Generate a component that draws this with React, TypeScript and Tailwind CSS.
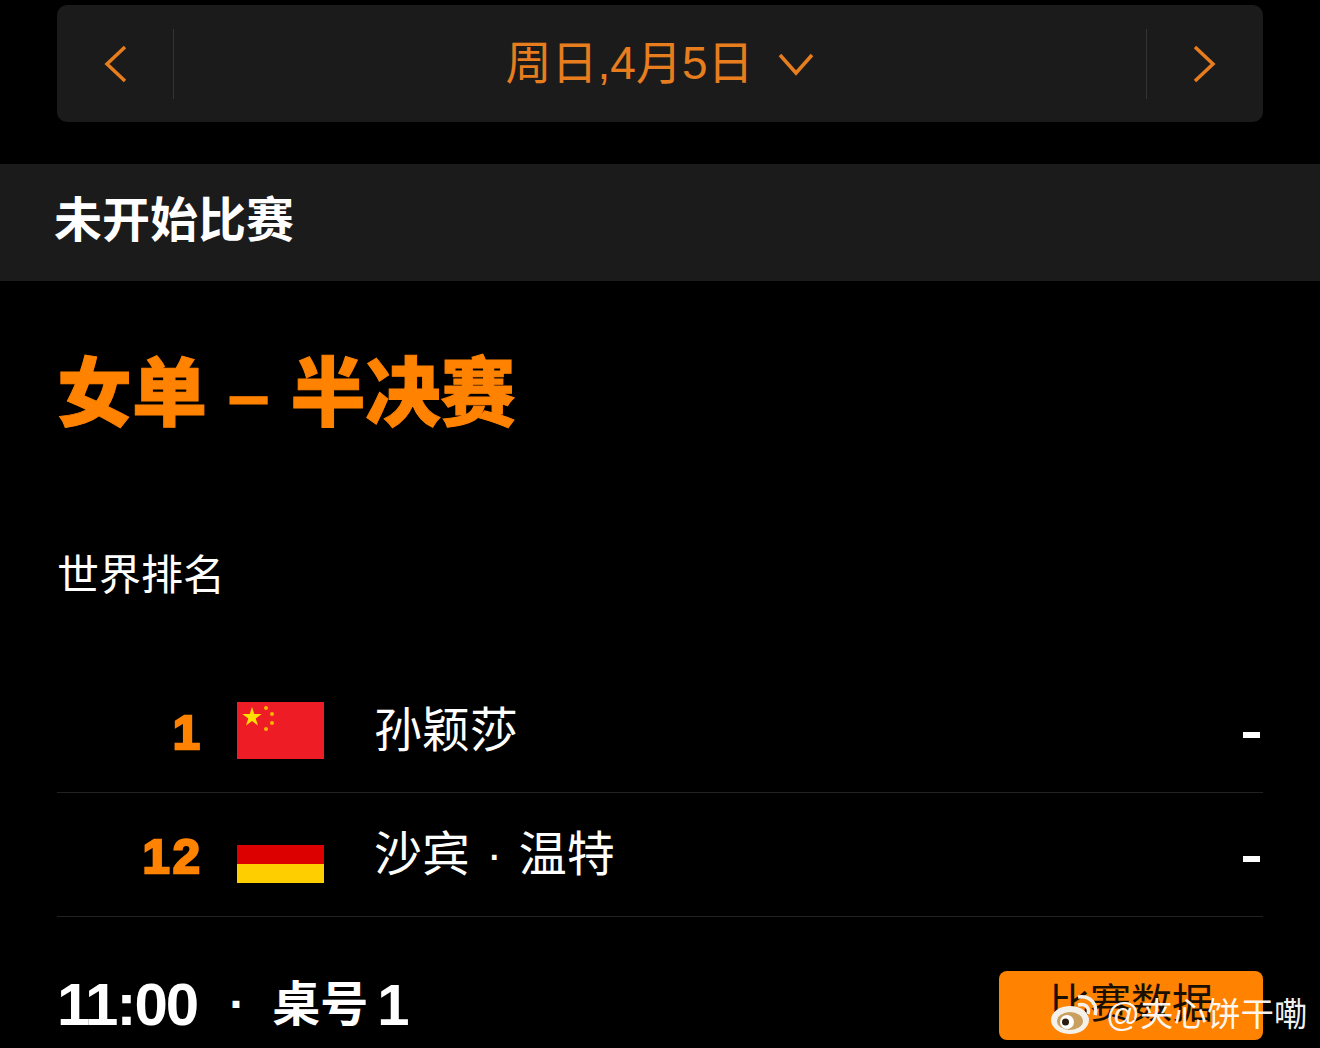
const cjk = "font-['Liberation_Sans','Noto_Sans_CJK_SC',sans-serif]";

function Row({ rank, name, flag, border }: { rank: string; name: string; flag: React.ReactNode; border?: boolean }) {
  return (
    <div className={`h-[124px] flex items-center ${border ? 'border-b border-[#222]' : ''}`}>
      <div className="w-[146px] mt-[4px] text-right text-[49px] leading-none font-black text-[#ff8200] [-webkit-text-stroke:2.5px_#ff8200] tracking-[3px]">{rank}</div>
      <div className="ml-[34px] w-[87px] h-[57px]">{flag}</div>
      <div className="ml-[50px] text-[48px] leading-none text-white font-normal [word-spacing:3px]">{name}</div>
      <div className="ml-auto mr-[3px] mt-[8px] w-[17px] h-[6px] bg-white" />
    </div>
  );
}

const China = (
  <svg width="87" height="57" viewBox="0 0 87 57" className="block">
    <rect width="87" height="57" fill="#ee1c25" />
    <polygon fill="#ffe000" points="15,5 17.3,12 24.7,12 18.7,16.4 21,23.4 15,19.1 9,23.4 11.3,16.4 5.3,12 12.7,12" />
    <circle cx="29" cy="6" r="2" fill="#f7b500" />
    <circle cx="35" cy="12" r="2" fill="#f7b500" />
    <circle cx="35" cy="21" r="2" fill="#f7b500" />
    <circle cx="29" cy="27" r="2" fill="#f7b500" />
  </svg>
);

const Germany = (
  <div className="h-full flex flex-col">
    <div className="h-[19px] bg-black" />
    <div className="h-[19px] bg-[#dd0000]" />
    <div className="h-[19px] bg-[#ffce00]" />
  </div>
);

export default function App() {
  return (
    <div className={`w-[1320px] h-[1048px] overflow-hidden bg-black text-white relative ${cjk}`}>
      <div className="pt-[5px] px-[57px]">
        <div className="h-[117px] rounded-[10px] bg-[#1b1b1b] flex items-center text-[#e87d1e]">
          <div className="w-[117px] h-[70px] border-r border-[#333] flex items-center justify-center">
            <svg width="26" height="38" viewBox="0 0 26 38" fill="none" stroke="#e87d1e" strokeWidth="3.5"><path d="M23 2 L5 19 L23 36" /></svg>
          </div>
          <div className="flex-1 flex items-center justify-center gap-[25px]">
            <span className="text-[46px] leading-none font-normal -mt-[2px]">周日,4月5日</span>
            <svg width="36" height="24" viewBox="0 0 36 24" fill="none" stroke="#e87d1e" strokeWidth="3.5"><path d="M2 3 L18 21 L34 3" /></svg>
          </div>
          <div className="w-[117px] h-[70px] border-l border-[#333] flex items-center justify-center">
            <svg width="26" height="38" viewBox="0 0 26 38" fill="none" stroke="#e87d1e" strokeWidth="3.5"><path d="M3 2 L21 19 L3 36" /></svg>
          </div>
        </div>
      </div>

      <div className="mt-[42px] h-[117px] bg-[#1b1b1b] flex items-center pl-[54px]">
        <span className="text-[48px] leading-none font-bold -mt-[3px]">未开始比赛</span>
      </div>

      <div className="px-[57px]">
        <div className="mt-[76px] text-[75px] leading-none font-black text-[#ff8200] [-webkit-text-stroke:1px_#ff8200]">女单 – 半决赛</div>
        <div className="mt-[123px] text-[42px] leading-none font-normal">世界排名</div>
        <div className="mt-[72px]">
          <Row rank="1" name="孙颖莎" flag={China} border />
          <Row rank="12" name="沙宾 · 温特" flag={Germany} border />
        </div>
        <div className="mt-[54px] flex items-center justify-between">
          <div className="flex items-center font-bold leading-none -mt-[2px]">
            <span className="text-[60px] tracking-[-2px]">11:00</span>
            <span className="ml-[32px] text-[48px]">·</span>
            <span className="ml-[27px] text-[48px]">桌号</span>
            <span className="ml-[9px] text-[58px]">1</span>
          </div>
          <div className="w-[264px] h-[69px] bg-[#ff8200] rounded-[8px] flex justify-center pt-[13px] text-[41px] leading-none text-[#1a0f00] font-normal">比赛数据</div>
        </div>
      </div>

      <div className="absolute left-[1050px] top-[994px] flex items-center text-[33.5px] leading-none text-white/95 font-normal">
        <svg width="48" height="42" viewBox="0 0 48 42">
          <ellipse cx="20" cy="26" rx="19" ry="14" fill="#f4f0ea" />
          <ellipse cx="20" cy="27" rx="13" ry="9" fill="#c9a05f" />
          <circle cx="17" cy="28" r="7" fill="#fff" />
          <circle cx="15.5" cy="28" r="3.5" fill="#2a1c10" />
          <path d="M28 11 C35 9 40 13 38 20" stroke="#f4f0ea" strokeWidth="3.5" fill="none" />
          <path d="M28 3 C40 1 48 10 45 21" stroke="#f4f0ea" strokeWidth="3.5" fill="none" />
        </svg>
        <span className="ml-[8px]">@夹心饼干嘞</span>
      </div>
    </div>
  );
}
